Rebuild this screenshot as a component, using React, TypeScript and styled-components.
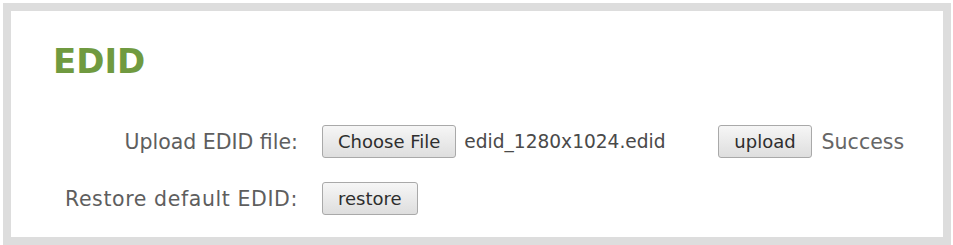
import React from "react";
import styled, { createGlobalStyle } from "styled-components";

const GlobalStyle = createGlobalStyle`
  html, body {
    margin: 0;
    padding: 0;
    background: #ffffff;
  }
  body {
    font-family: "DejaVu Sans", Verdana, sans-serif;
  }
`;

const Panel = styled.section`
  box-sizing: border-box;
  margin: 3px 2px 0 3px;
  height: 242px;
  border: 8px solid #dddddd;
  background: #ffffff;
  padding: 30px 0 0 42px;
`;

const Title = styled.h2`
  margin: 0;
  font-size: 34px;
  font-weight: bold;
  line-height: 40px;
  color: #709a40;
`;

const Form = styled.div`
  display: grid;
  grid-template-columns: 245px auto;
  column-gap: 24px;
  row-gap: 24px;
  margin-top: 44px;
  align-items: center;
`;

const Label = styled.span<{ $spacing?: number }>`
  justify-self: end;
  font-size: 20.5px;
  color: #5e5e5e;
  white-space: nowrap;
  letter-spacing: ${({ $spacing = 0 }) => $spacing}px;
`;

const Controls = styled.div`
  display: flex;
  align-items: center;
`;

const Button = styled.button`
  box-sizing: border-box;
  height: 33px;
  padding: 0 15px;
  border: 1px solid #a9a9a9;
  border-radius: 3px;
  background: linear-gradient(#f6f6f6, #dedede);
  font-family: "DejaVu Sans", Verdana, sans-serif;
  font-size: 18px;
  color: #2e2e2e;
  cursor: pointer;
`;

const FileName = styled.span<{ $width: number }>`
  width: ${({ $width }) => $width}px;
  padding-left: 8px;
  font-size: 18.6px;
  color: #4a4a4a;
  white-space: nowrap;
`;

const Status = styled.span`
  margin-left: 10px;
  font-size: 20.5px;
  color: #666666;
`;

export default function App() {
  return (
    <>
      <GlobalStyle />
      <Panel>
        <Title>EDID</Title>
        <Form>
          <Label>Upload EDID file:</Label>
          <Controls>
            <Button>Choose File</Button>
            <FileName $width={254}>edid_1280x1024.edid</FileName>
            <Button>upload</Button>
            <Status>Success</Status>
          </Controls>
          <Label $spacing={0.6}>Restore default EDID:</Label>
          <Controls>
            <Button>restore</Button>
          </Controls>
        </Form>
      </Panel>
    </>
  );
}
